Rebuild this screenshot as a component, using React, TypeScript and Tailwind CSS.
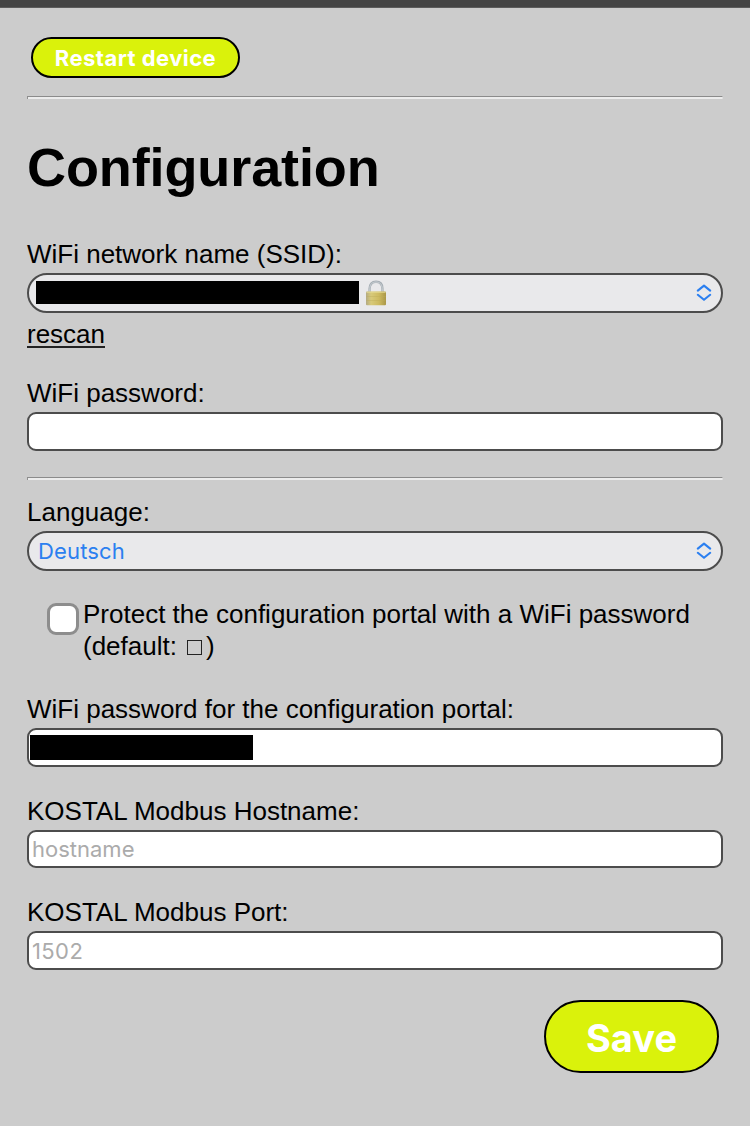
import React from "react";

function Divider({ className = "" }: { className?: string }) {
  return (
    <div
      className={`h-[3px] w-full shrink-0 border-t border-r border-l border-t-[#8b8b8b] border-r-[#dedede] border-l-[#909090] bg-[#ececec] ${className}`}
    />
  );
}

function Label({ children, className = "" }: { children: React.ReactNode; className?: string }) {
  return <div className={`h-[34px] text-[26px] leading-[30px] whitespace-nowrap ${className}`}>{children}</div>;
}

function Field({ children, className = "" }: { children?: React.ReactNode; className?: string }) {
  return (
    <div className={`flex w-full items-center rounded-[9px] border-2 border-[#4c4c4c] bg-white ${className}`}>
      {children}
    </div>
  );
}

function Select({ children, className = "" }: { children?: React.ReactNode; className?: string }) {
  return (
    <div className={`flex h-10 w-full items-center rounded-full border-2 border-[#4c4c4c] bg-[#e9e9eb] ${className}`}>
      {children}
      <svg className="mr-[9px] ml-auto" width="16" height="18" viewBox="0 0 16 18" fill="none" stroke="#2b7ff0" strokeWidth="2.1" strokeLinecap="round" strokeLinejoin="round">
        <path d="M1.8 6.6 8 1.6l6.2 5M1.8 10.8 8 15.8l6.2-5" />
      </svg>
    </div>
  );
}

function Padlock() {
  return (
    <svg className="ml-[6px]" width="22" height="26" viewBox="0 0 22 26">
      <defs>
        <linearGradient id="lock-body" x1="0" x2="1" y1="0" y2="0">
          <stop offset="0" stopColor="#b3aa83" />
          <stop offset="0.25" stopColor="#d8ca7a" />
          <stop offset="0.65" stopColor="#cdba60" />
          <stop offset="1" stopColor="#aa9748" />
        </linearGradient>
      </defs>
      <path d="M4.6 13V8.6C4.6 4.2 7 1.8 11 1.8s6.4 2.4 6.4 6.8V13" fill="none" stroke="#a5adb3" strokeWidth="2.4" />
      <path d="M4.8 12V8.6C4.8 4.4 7.2 2 11 2s6.2 2.4 6.2 6.6V12" fill="none" stroke="#ccd2d7" strokeWidth="1" />
      <rect x="1" y="11.5" width="20" height="13.8" rx="1" fill="url(#lock-body)" />
      <path d="M1.5 12.2h19" stroke="#e5d990" strokeWidth="1" />
      <path d="M1.5 16.5h19M1.5 20.5h19" stroke="#bdab58" strokeWidth="0.4" />
    </svg>
  );
}

export default function App() {
  return (
    <div className="flex h-[1126px] w-[750px] flex-col overflow-hidden bg-[#cccccc] font-['Liberation_Sans',Arial,sans-serif] text-black">
      <div className="h-2 shrink-0 border-b border-[#5c5c5c] bg-[#444444]" />
      <main className="flex flex-col px-[27px] pt-[29px]">
        <button className="ml-1 flex h-[41px] w-[209px] items-center justify-center rounded-full border-2 border-black bg-[#daf20b] pt-px font-['Inter',sans-serif] text-[22px] font-bold tracking-[0.45px] whitespace-nowrap text-white">
          Restart device
        </button>
        <Divider className="mt-[18px]" />

        <h1 className="mt-[37px] h-[103px] text-[54px] leading-[62px] font-bold tracking-[-0.1px]">Configuration</h1>

        <Label>WiFi network name (SSID):</Label>
        <Select>
          <div className="mb-px ml-[7px] h-[23px] w-[323px] bg-black" />
          <Padlock />
        </Select>
        <a className="mt-[6px] h-[29px] w-[78px] border-b-2 border-[#222222] text-[26px] leading-[30px]">rescan</a>

        <Label className="mt-[30px]">WiFi password:</Label>
        <Field className="h-[39px]" />
        <Divider className="mt-[26px]" />

        <Label className="mt-[17px]">Language:</Label>
        <Select>
          <span className="ml-[9px] font-['Inter',sans-serif] text-[22px] tracking-[0.15px] text-[#2b7ff0]">Deutsch</span>
        </Select>

        <div className="mt-[27px] flex h-24 pl-5">
          <div className="mt-[5px] mr-1 h-8 w-8 shrink-0 rounded-[9px] border-[3px] border-[#8d8d8d] bg-white" />
          <div className="text-[26px] leading-8 whitespace-nowrap">
            <div>Protect the configuration portal with a WiFi password</div>
            <div className="flex">
              <span>(default:</span>
              <span className="mt-[10px] mr-[4px] ml-[10px] h-[15px] w-[15px] border border-[#222222]" />
              <span>)</span>
            </div>
          </div>
        </div>

        <Label>WiFi password for the configuration portal:</Label>
        <Field className="h-[39px]">
          <div className="ml-px h-[25px] w-[223px] bg-black" />
        </Field>

        <Label className="mt-[29px]">KOSTAL Modbus Hostname:</Label>
        <Field className="h-[38px]">
          <span className="ml-[3px] font-['Inter',sans-serif] text-[22px] text-[#ababab]">hostname</span>
        </Field>

        <Label className="mt-[29px]">KOSTAL Modbus Port:</Label>
        <Field className="h-[39px]">
          <span className="ml-[3px] pt-px font-['Inter',sans-serif] text-[22px] tracking-[0.4px] text-[#ababab]">1502</span>
        </Field>

        <button className="mt-[30px] mr-1 flex h-[73px] w-[175px] items-center justify-center self-end rounded-full border-2 border-black bg-[#daf20b] pt-[3px] font-['Inter',sans-serif] text-[38px] font-bold text-white">
          Save
        </button>
      </main>
    </div>
  );
}
